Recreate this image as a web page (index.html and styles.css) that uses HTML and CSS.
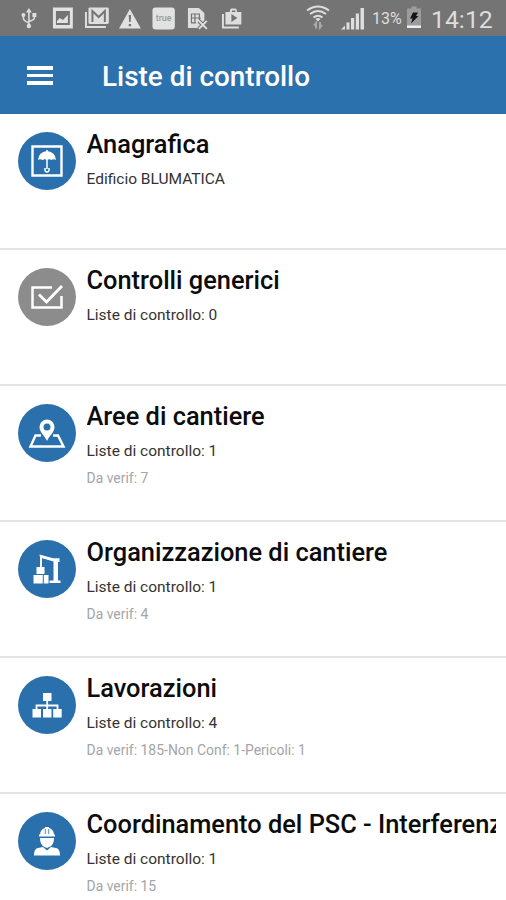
FILE: index.html
```html
<!DOCTYPE html>
<html lang="it">
<head>
<meta charset="utf-8">
<title>Liste di controllo</title>
<link rel="stylesheet" href="styles.css">
</head>
<body>
<div class="status">
  <div class="notifications">
    <svg viewBox="0 0 34 36"><g fill="none" stroke="#dedede" stroke-width="1.6"><path d="M17 11v15M11.500 15v3.500q0 2 5.500 4.500M22.500 15v3q0 2-5.500 3.500"/></g><path d="M17 8l3 4.500h-6zM20.500 13h4v4h-4z" fill="#dedede"/><circle cx="11.500" cy="15" r="2" fill="#dedede"/><circle cx="17" cy="26" r="2.200" fill="#dedede"/></svg>
    <svg viewBox="0 0 34 36"><path fill="#e2e2e2" fill-rule="evenodd" d="M7 7.500h20v21H7zM10 11v14h14V11z"/><path d="M11 23v-2l3-3 3 2 5-5v8z" fill="#e2e2e2"/></svg>
    <svg viewBox="0 0 34 36"><path d="M6 12v15h20" fill="none" stroke="#dedede" stroke-width="2"/><rect x="8.500" y="7.500" width="20.500" height="16.500" rx="1.500" fill="#dedede"/><path d="M12.500 22V11l6.300 6 6.200-6v11" fill="none" stroke="#747474" stroke-width="2"/></svg>
    <svg viewBox="0 0 34 36"><path d="M17 9l11 19.500H6z" fill="#e2e2e2"/><path d="M15.800 15h2.400l-.4 7h-1.600zM15.800 24h2.400v2.400h-2.400z" fill="#747474"/></svg>
    <svg viewBox="0 0 34 36"><rect x="5.500" y="7.500" width="22.500" height="22" rx="3" fill="#e2e2e2"/><text class="badge" x="16.800" y="21.500" text-anchor="middle">true</text></svg>
    <svg viewBox="0 0 34 36"><path d="M7 8h11l5.500 5v15H7z" fill="#dedede"/><path d="M10 14h9M10 18h10M10 23h5M10.500 14v9M14 14v9M18.500 14v6" fill="none" stroke="#747474" stroke-width="1.200"/><path d="M18 21l8 8m0-8l-8 8" stroke="#747474" stroke-width="4"/><path d="M18 21l8 8m0-8l-8 8" stroke="#e2e2e2" stroke-width="1.800"/></svg>
    <svg viewBox="0 0 34 36"><path d="M8 14v13.500h16" fill="none" stroke="#dedede" stroke-width="2"/><path fill="#dedede" fill-rule="evenodd" d="M10.500 12H15v-1.500q0-2 2-2h3q2 0 2 2V12h4.500v12.500h-16zM17 12h3.500v-1.500H17zM16.500 14v8l6-4z"/></svg>
  </div>
  <div class="system">
    <svg class="wifi" viewBox="0 0 26 36"><g fill="none" stroke="#dedede" stroke-width="2"><path d="M2 10.500q11-8 22 0M5 14q8-6 16 0M8.500 17.500q4.500-3.500 9 0"/></g><path d="M10.500 19q2.500-2 5 0L13 21.500z" fill="#dedede"/><path d="M11 28.500v-5.500l-2 2.500M15 22v5.500l2-2.500" fill="none" stroke="#aaa" stroke-width="2"/></svg>
    <svg class="signal" viewBox="0 0 24 36"><path d="M0 29.500L4 25.500v4zM5.500 22.500h3v7h-3zM10 18h3.200v11.500H10zM14.800 13.500H18v16h-3.200zM19.500 8H23v21.500h-3.500z" fill="#dedede"/></svg>
    <span class="percent">13%</span>
    <svg class="battery" viewBox="0 0 14 36"><path d="M4.500 6.500h5v2H14V28H0V8.500h4.500z" fill="#9c9c9c"/><path d="M0 25.500h14V28H0z" fill="#eee"/><path d="M6 12.500h5L9 16h2.500L4 23.500l1.500-5H3z" fill="#151515"/></svg>
    <span class="clock">14:12</span>
  </div>
</div>
<header class="appbar">
  <div class="menu"><i></i><i></i><i></i></div>
  <h1>Liste di controllo</h1>
</header>
<main>
  <section class="row">
    <svg class="icon" viewBox="0 0 58 58"><circle cx="29" cy="29" r="29"/><path d="M14.500 14.500h29v29h-29z" fill="none" stroke="#fff" stroke-width="2.400"/><path d="M20 28q.5-8 9-9 8.500 1 9 9-2-1.500-4.500 0-2-1.500-4.500 0-2-1.500-4.500 0-2.500-1.500-4.500 0z" fill="#fff"/><path d="M29 18v19M27 36v2.500q2 3 4 0V36" fill="none" stroke="#fff" stroke-width="1.500"/></svg>
    <div class="info"><h2>Anagrafica</h2><p>Edificio BLUMATICA</p></div>
  </section>
  <section class="row">
    <svg class="icon done" viewBox="0 0 58 58"><circle cx="29" cy="29" r="29"/><path d="M34 19.500H14.500v20h29V28" fill="none" stroke="#fff" stroke-width="2.500"/><path d="M21 26.500l7.500 7.500L44 18" fill="none" stroke="#fff" stroke-width="2.800"/></svg>
    <div class="info"><h2>Controlli generici</h2><p>Liste di controllo: 0</p></div>
  </section>
  <section class="row">
    <svg class="icon" viewBox="0 0 58 58"><circle cx="29" cy="29" r="29"/><path d="M23 31.500h-5.500L12.500 42.500h33L40 31.500h-5" fill="none" stroke="#fff" stroke-width="2.400"/><path fill="#fff" fill-rule="evenodd" d="M29 37c-2-5-7.500-8.500-7.500-14a7.500 7.500 0 0 1 15 0c0 5.500-5.500 9-7.500 14zM29 19.500a3.500 3.500 0 1 0 0 7 3.500 3.500 0 0 0 0-7z"/></svg>
    <div class="info"><h2>Aree di cantiere</h2><p>Liste di controllo: 1</p><small>Da verif: 7</small></div>
  </section>
  <section class="row">
    <svg class="icon" viewBox="0 0 58 58"><circle cx="29" cy="29" r="29"/><path d="M23 27V16.500l15 4" fill="none" stroke="#fff" stroke-width="2"/><path d="M21.500 14.500L35 18.300h6.500V22H40v18.500h2.500V43h-11v-2.500h4V21.500L22 17.500zM18.500 27h8v7h-8zM15.500 35h9.300v8.500h-9.300zM25.800 35h4.700v8.500h-4.700z" fill="#fff"/></svg>
    <div class="info"><h2>Organizzazione di cantiere</h2><p>Liste di controllo: 1</p><small>Da verif: 4</small></div>
  </section>
  <section class="row">
    <svg class="icon" viewBox="0 0 58 58"><circle cx="29" cy="29" r="29"/><path d="M25 17h8.500v8H25zM14.500 33h8.500v8.500h-8.500zM25 33h8.500v8.500H25zM35.200 33h8.500v8.500h-8.500z" fill="#fff"/><path d="M29.200 24v10M18.500 34v-4.500h21V34" fill="none" stroke="#fff" stroke-width="1.800"/></svg>
    <div class="info"><h2>Lavorazioni</h2><p>Liste di controllo: 4</p><small>Da verif: 185-Non Conf: 1-Pericoli: 1</small></div>
  </section>
  <section class="row">
    <svg class="icon" viewBox="0 0 58 58"><circle cx="29" cy="29" r="29"/><path d="M22 22.500q.5-5.500 5-6.500v-1h4v1q4.500 1 5 6.500h1v2H21v-2zM22 26h14q0 6-3.500 8.500L29 36l-3.500-1.500Q22 32 22 26zM16 43.500q0-6 3-7.200l6-1.300 4 3.500 4-3.500 6 1.300q3 1.200 3 7.200z" fill="#fff"/><path d="M27.300 17v5M30.700 17v5" stroke="#2a70ac" stroke-width=".8"/></svg>
    <div class="info"><h2>Coordinamento del PSC - Interferenze</h2><p>Liste di controllo: 1</p><small>Da verif: 15</small></div>
  </section>
</main>
</body>
</html>
```
FILE: styles.css
```css
* { box-sizing: border-box; }
body {
  margin: 0;
  height: 900px;
  overflow: hidden;
  background: #fff;
  font-family: Roboto, "Liberation Sans", sans-serif;
}
h1, h2, p { margin: 0; }
svg { display: block; flex: none; }
.status {
  display: flex;
  justify-content: space-between;
  height: 36px;
  padding: 0 14px 0 12px;
  background: #747474;
  color: #dedede;
}
.notifications, .system { display: flex; }
.notifications svg { width: 33.8px; height: 36px; }
.badge { font: 500 9px Roboto, sans-serif; fill: #999; }
.wifi { width: 26px; height: 36px; margin-right: 10px; }
.signal { width: 24px; height: 36px; margin-right: 7px; }
.percent { width: 31px; font-size: 16px; line-height: 38px; margin-right: 4px; }
.battery { width: 14px; height: 36px; margin-right: 10px; }
.clock { width: 61px; font-size: 24.8px; line-height: 39px; white-space: nowrap; }
.appbar {
  display: flex;
  align-items: center;
  height: 78px;
  padding-left: 27px;
  background: #2b71ad;
  color: #fff;
}
.menu { display: grid; gap: 4px; width: 26px; margin-right: 49px; padding-top: 1px; }
.menu i { height: 3.5px; background: #fff; }
h1 { font-size: 27.9px; font-weight: 500; line-height: 34px; padding-top: 3px; }
.row {
  display: flex;
  height: 136px;
  padding: 17.5px 10px 0 18px;
  border-bottom: 2px solid #e4e4e4;
}
.icon { width: 58px; height: 58px; margin-right: 10.5px; fill: #2a70ac; }
.done { fill: #8c8c8c; }
.info { flex: 1; min-width: 0; margin-top: -5px; overflow: hidden; white-space: nowrap; }
h2 { font-size: 25.4px; font-weight: 500; line-height: 34px; color: #0c0c0c; }
p { margin-top: 8px; font-size: 15.5px; line-height: 20px; color: #333; }
small { display: block; margin-top: 8px; font-size: 13.95px; line-height: 18px; color: #a5a5a5; }
```
